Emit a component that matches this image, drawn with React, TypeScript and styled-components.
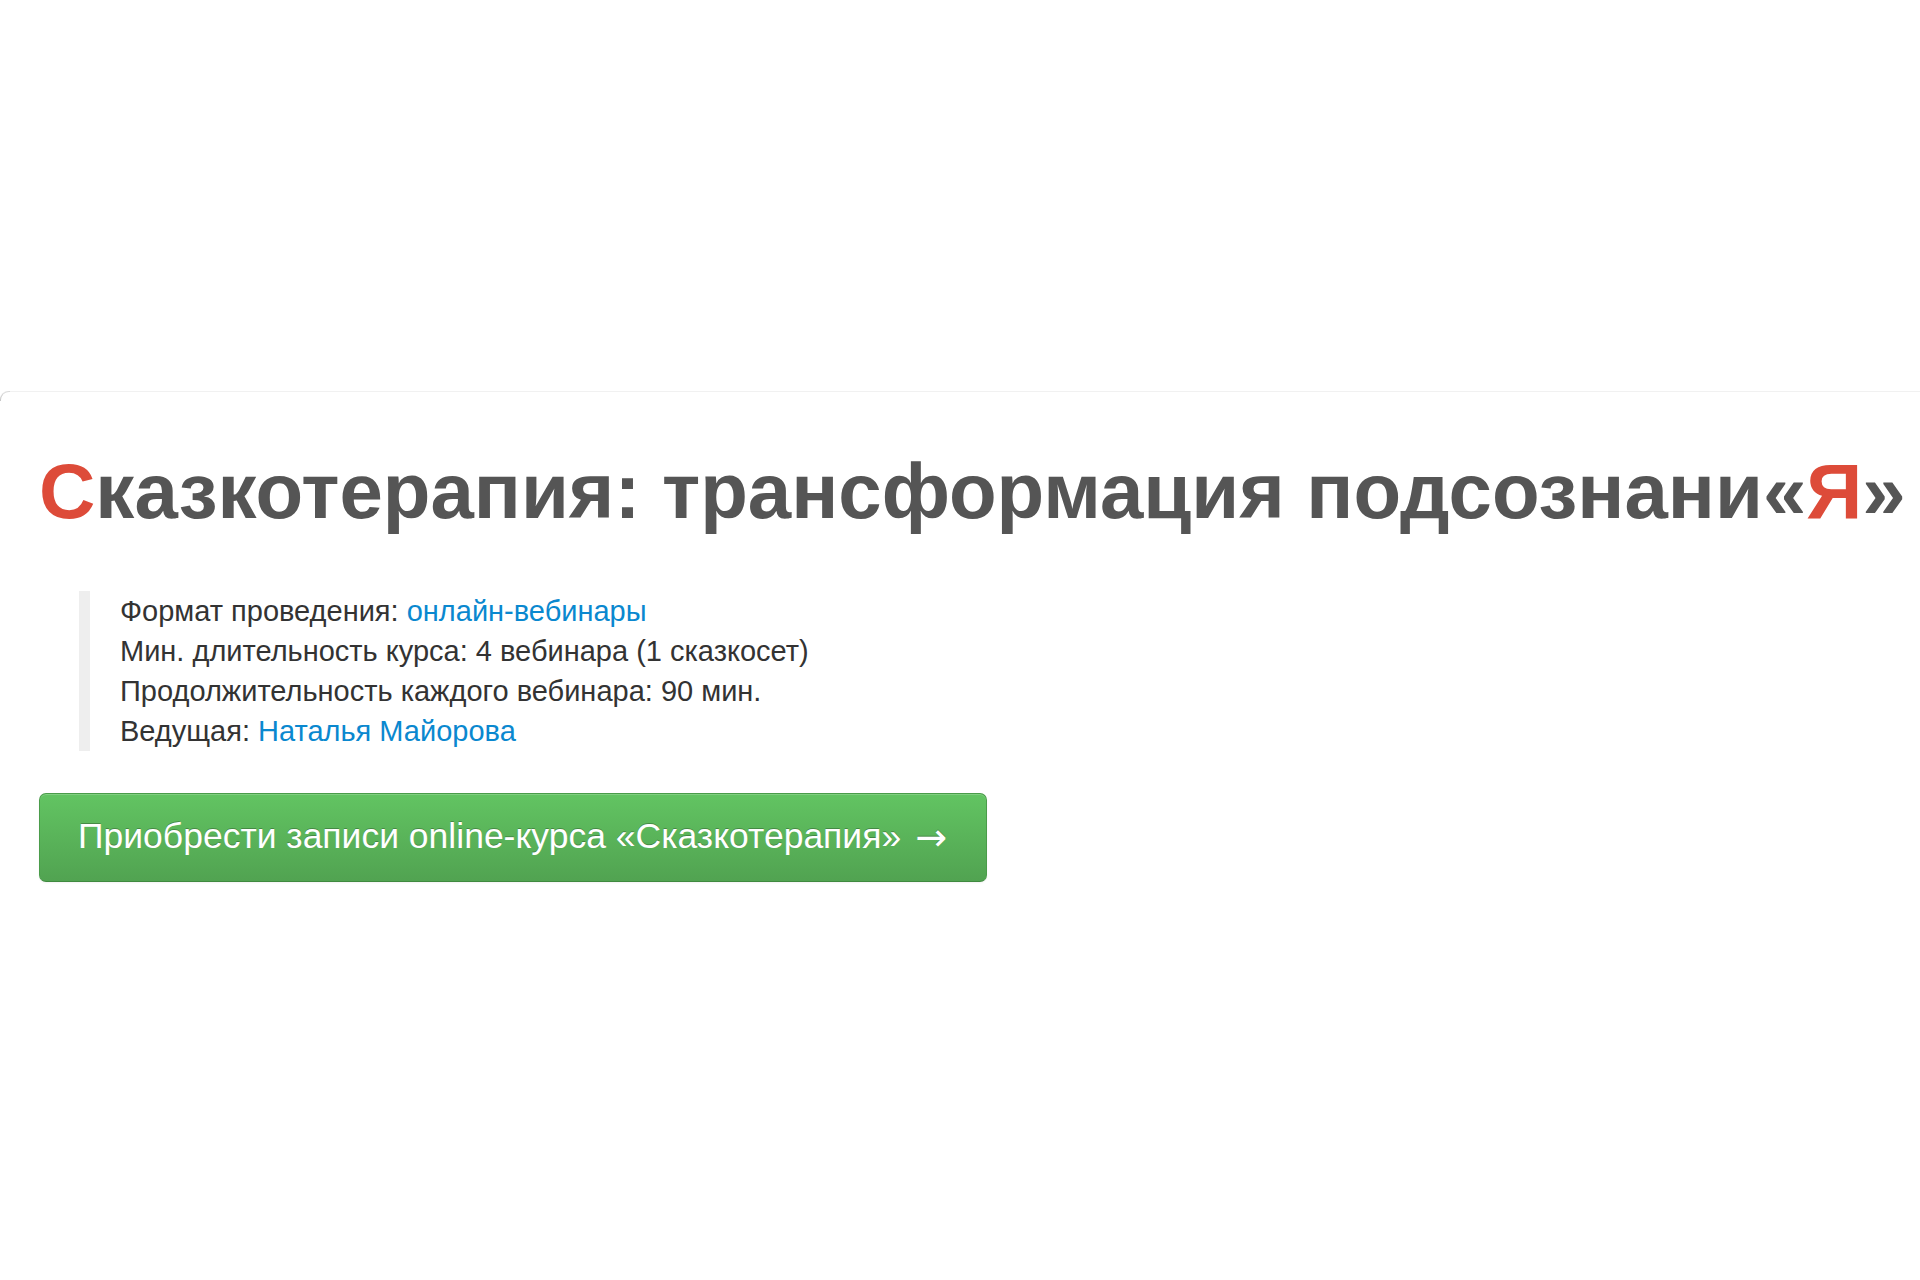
import React from "react";
import styled, { createGlobalStyle } from "styled-components";

const GlobalStyle = createGlobalStyle`
  html, body {
    margin: 0;
    padding: 0;
    background: #ffffff;
  }
  body {
    font-family: "Liberation Sans", Arial, Helvetica, sans-serif;
    color: #333333;
  }
`;

const Page = styled.div`
  width: 1920px;
  min-height: 1280px;
  box-sizing: border-box;
  padding-top: 391px;
  overflow: hidden;
`;

const Card = styled.section`
  position: relative;
  box-sizing: border-box;
  width: 1930px;
  border-top: 1px solid #f1f1f1;
  border-top-left-radius: 8px;
  padding: 0 0 40px 39px;

  &::before {
    content: "";
    position: absolute;
    left: 0;
    top: -1px;
    width: 10px;
    height: 10px;
    border-top: 1px solid #d8d8d8;
    border-left: 1px solid #c8c8c8;
    border-top-left-radius: 9px;
    box-sizing: border-box;
  }
`;

const Title = styled.h1`
  margin: 0;
  padding-top: 54px;
  font-size: 78px;
  line-height: 90px;
  font-weight: 700;
  color: #555555;
  white-space: nowrap;
`;

const Accent = styled.span`
  color: #dd4b39;
`;

const Quote = styled.blockquote`
  margin: 55px 0 0 40px;
  padding: 0 0 0 30px;
  border-left: 11px solid #eeeeee;
`;

const Line = styled.p`
  margin: 0;
  font-size: 29px;
  line-height: 40px;
  color: #333333;
  white-space: nowrap;
`;

const Link = styled.a`
  color: #0a88cf;
  text-decoration: none;
`;

const BuyButton = styled.a`
  display: inline-flex;
  align-items: center;
  gap: 14px;
  box-sizing: border-box;
  margin-top: 42px;
  width: 948px;
  height: 89px;
  padding: 0 0 2px 38px;
  font-size: 35.5px;
  color: #ffffff;
  text-decoration: none;
  text-shadow: 0 -1px 0 rgba(0, 0, 0, 0.25);
  background-image: linear-gradient(to bottom, #62c462, #51a351);
  border: 1px solid #4a9c4a;
  border-bottom-color: #3f8a3f;
  border-radius: 7px;
  box-shadow: inset 0 1px 0 rgba(255, 255, 255, 0.2), 0 1px 2px rgba(0, 0, 0, 0.05);
  white-space: nowrap;
`;

const Arrow = styled.span`
  font-family: "DejaVu Sans", sans-serif;
  font-size: 38px;
  line-height: 1;
`;

export default function App() {
  return (
    <Page>
      <GlobalStyle />
      <Card>
        <Title>
          <Accent>С</Accent>казкотерапия: трансформация подсознани«<Accent>Я</Accent>»
        </Title>
        <Quote>
          <Line>
            Формат проведения: <Link href="#">онлайн-вебинары</Link>
          </Line>
          <Line>Мин. длительность курса: 4 вебинара (1 сказкосет)</Line>
          <Line>Продолжительность каждого вебинара: 90 мин.</Line>
          <Line>
            Ведущая: <Link href="#">Наталья Майорова</Link>
          </Line>
        </Quote>
        <BuyButton href="#">
          <span>Приобрести записи online-курса «Сказкотерапия»</span>
          <Arrow>→</Arrow>
        </BuyButton>
      </Card>
    </Page>
  );
}
